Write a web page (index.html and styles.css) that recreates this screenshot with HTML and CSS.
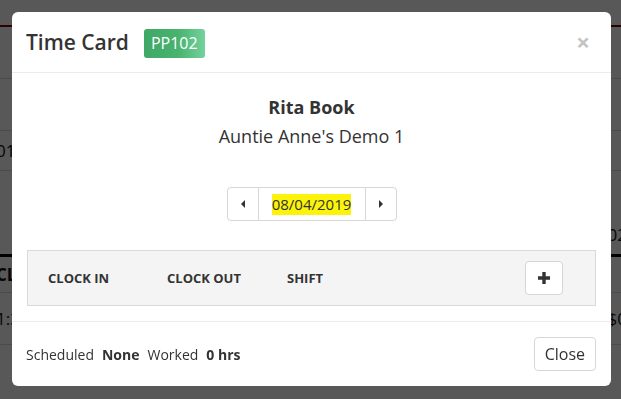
FILE: index.html
```html
<!DOCTYPE html>
<html lang="en">
<head>
    <meta charset="UTF-8">
    <meta name="viewport" content="width=device-width, initial-scale=1.0">
    <title>Time Card</title>
    <link rel="stylesheet" href="styles.css">
</head>
<body>
    <div class="page">
        <div class="page-top"></div>
        <div class="page-row"></div>
        <div class="page-row"></div>
        <div class="page-row short"><span>01</span><span></span></div>
        <div class="page-row tall"><span></span><span class="low">02</span></div>
        <div class="page-row head"><span>CL</span><span></span></div>
        <div class="page-row"><span>1:3</span><span>$0</span></div>
    </div>

    <div class="backdrop"></div>

    <div class="modal">
        <div class="modal-header">
            <h2>Time Card</h2>
            <span class="badge">PP102</span>
            <button class="close-x">&times;</button>
        </div>

        <div class="modal-body">
            <div class="employee">
                <div class="name">Rita Book</div>
                <div class="store">Auntie Anne's Demo 1</div>
            </div>

            <div class="date-picker">
                <button class="arrow">
                    <svg width="8" height="8" viewBox="0 0 8 8"><path d="M6 0 L2 4 L6 8 Z" fill="#333"/></svg>
                </button>
                <div class="date"><span class="hl">08/04/2019</span></div>
                <button class="arrow">
                    <svg width="8" height="8" viewBox="0 0 8 8"><path d="M2 0 L6 4 L2 8 Z" fill="#333"/></svg>
                </button>
            </div>

            <div class="punch-table">
                <div class="col in">CLOCK IN</div>
                <div class="col out">CLOCK OUT</div>
                <div class="col shift">SHIFT</div>
                <button class="add">
                    <svg width="14" height="14" viewBox="0 0 14 14"><path d="M5.3 1 H8.7 V5.3 H13 V8.7 H8.7 V13 H5.3 V8.7 H1 V5.3 H5.3 Z" fill="#333"/></svg>
                </button>
            </div>
        </div>

        <div class="modal-footer">
            <div class="totals">
                <span>Scheduled</span>
                <b>None</b>
                <span>Worked</span>
                <b>0 hrs</b>
            </div>
            <button class="btn-close">Close</button>
        </div>
    </div>
</body>
</html>
```

FILE: styles.css
```css
* {
    margin: 0;
    padding: 0;
    box-sizing: border-box;
}

body {
    font-family: 'Open Sans', 'Noto Sans', sans-serif;
    background: #ffffff;
    color: #333;
    width: 621px;
    height: 399px;
    overflow: hidden;
}

/* page behind the dialog */
.page {
    width: 621px;
}

.page-top {
    height: 27px;
    border-bottom: 2px solid #7a0000;
}

.page-row {
    height: 52px;
    border-bottom: 1px solid #d8d8d8;
    display: flex;
    justify-content: space-between;
    align-items: center;
    font-size: 17px;
    color: #111;
}

.page-row.short {
    height: 40px;
}

.page-row.tall {
    height: 86px;
    border-bottom: 3px solid #000;
}

.page-row .low {
    align-self: flex-end;
    margin-bottom: 8px;
}

.page-row.head {
    height: 36px;
    font-weight: 700;
}

.page-row span:first-child {
    margin-left: -4px;
}

.page-row span:last-child {
    margin-right: -6px;
}

.backdrop {
    position: fixed;
    inset: 0;
    background: rgba(0, 0, 0, 0.655);
}

/* dialog */
.modal {
    position: fixed;
    left: 12px;
    top: 12px;
    width: 599px;
    height: 374px;
    background: #fff;
    border-radius: 6px;
    display: flex;
    flex-direction: column;
}

.modal-header {
    height: 61px;
    padding: 0 14px;
    border-bottom: 1px solid #ececec;
    display: flex;
    align-items: center;
}

.modal-header h2 {
    font-size: 21px;
    font-weight: 600;
    color: #333;
    margin-right: 15px;
}

.badge {
    background: linear-gradient(90deg, #3fa866 0%, #48b26f 55%, #73d29c 100%);
    color: #fff;
    font-size: 16px;
    line-height: 29px;
    padding: 0 7px;
    border-radius: 3px;
    margin-top: 2px;
}

.close-x {
    margin-left: auto;
    margin-right: 7px;
    background: none;
    border: none;
    font-family: 'Open Sans', sans-serif;
    font-size: 24px;
    font-weight: 700;
    color: #c4c4c4;
    line-height: 1;
    cursor: pointer;
}

.modal-body {
    flex: 1;
    padding: 0 15px;
    border-bottom: 1px solid #ececec;
}

.employee {
    text-align: center;
    padding-top: 21px;
}

.name {
    font-size: 18px;
    font-weight: 700;
    line-height: 27px;
}

.store {
    font-size: 18px;
    line-height: 27px;
    margin-top: 2px;
}

.date-picker {
    display: flex;
    justify-content: center;
    margin-top: 37px;
    height: 34px;
}

.date-picker .arrow {
    width: 32px;
    background: #fff;
    border: 1px solid #d6d6d6;
    display: flex;
    align-items: center;
    justify-content: center;
    cursor: pointer;
}

.date-picker .arrow:first-child {
    border-radius: 4px 0 0 4px;
}

.date-picker .arrow:last-child {
    border-radius: 0 4px 4px 0;
}

.date {
    width: 106px;
    border-top: 1px solid #d6d6d6;
    border-bottom: 1px solid #d6d6d6;
    display: flex;
    align-items: center;
    justify-content: center;
    font-size: 15px;
}

.hl {
    background: #fbf40a;
    line-height: 21px;
    color: #333;
}

.punch-table {
    margin-top: 29px;
    height: 56px;
    background: #f4f4f4;
    border: 1px solid #d9d9d9;
    display: flex;
    align-items: center;
    padding-left: 20px;
    padding-right: 32px;
}

.col {
    font-size: 13px;
    font-weight: 700;
    color: #333;
    margin-top: -1px;
}

.col.in {
    width: 119px;
}

.col.out {
    width: 120px;
}

.add {
    margin-left: auto;
    width: 38px;
    height: 34px;
    background: #fff;
    border: 1px solid #d6d6d6;
    border-radius: 4px;
    display: flex;
    align-items: center;
    justify-content: center;
    cursor: pointer;
}

.modal-footer {
    height: 64px;
    display: flex;
    align-items: center;
    padding: 0 15px 0 14px;
}

.totals {
    display: flex;
    gap: 8px;
    font-size: 14px;
    color: #333;
}

.btn-close {
    margin-left: auto;
    height: 34px;
    padding: 0 10px;
    background: #fff;
    border: 1px solid #d6d6d6;
    border-radius: 4px;
    font-family: 'Open Sans', sans-serif;
    font-size: 16px;
    color: #333;
    cursor: pointer;
}
```
